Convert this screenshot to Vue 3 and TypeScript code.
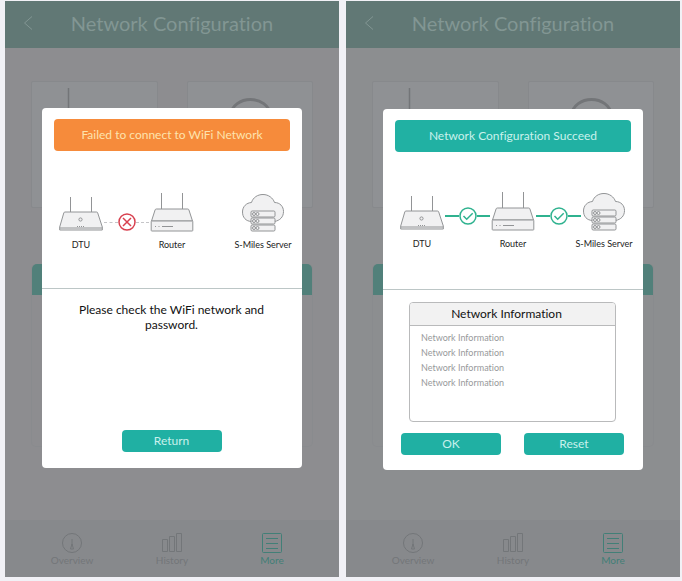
<script setup lang="ts">
type Tone = 'error' | 'success'

interface Screen {
  id: string
  tone: Tone
  status: string
  message?: string
  details?: string[]
  actions: string[]
}

const screens: Screen[] = [
  {
    id: 'failed',
    tone: 'error',
    status: 'Failed to connect to WiFi Network',
    message: 'Please check the WiFi network and password.',
    actions: ['Return'],
  },
  {
    id: 'succeeded',
    tone: 'success',
    status: 'Network Configuration Succeed',
    details: ['Network Information', 'Network Information', 'Network Information', 'Network Information'],
    actions: ['OK', 'Reset'],
  },
]
</script>

<template>
  <main class="page">
    <section v-for="screen in screens" :key="screen.id" class="phone" :class="screen.tone">
      <header class="topbar">
        <button class="back" type="button" aria-label="Back">
          <svg width="10" height="16" viewBox="0 0 10 16"><path d="M9 1.5 1.5 8 9 14.5" /></svg>
        </button>
        <h1>Network Configuration</h1>
      </header>

      <div class="content">
        <div class="cards">
          <div class="card">
            <svg width="124" height="60" viewBox="0 0 124 60"><path d="M36.500 6V50" stroke-width="1.500" /></svg>
          </div>
          <div class="card">
            <svg width="124" height="60" viewBox="0 0 124 60"><path d="M42 34C45 12 80 12 83 34" stroke-width="3" /></svg>
          </div>
        </div>
        <div class="panel"><div class="panel-head"></div></div>
      </div>

      <nav class="tabs">
        <a href="#overview">
          <svg width="22" height="22" viewBox="0 0 22 22">
            <circle cx="11" cy="11" r="9.500" /><path d="M11 7v6M11 12l-1.500 5h3z" />
          </svg>
          <span>Overview</span>
        </a>
        <a href="#history">
          <svg width="22" height="22" viewBox="0 0 22 22">
            <path d="M1.500 7.500h5v12h-5zM8.500 4.500h5v15h-5zM15.500 1.500h5v18h-5z" />
          </svg>
          <span>History</span>
        </a>
        <a href="#more" class="active">
          <svg width="22" height="22" viewBox="0 0 22 22">
            <rect x="1.500" y="1.500" width="19" height="19" rx="1" /><path d="M5 6.500h12M5 11.500h12M5 16.500h12" />
          </svg>
          <span>More</span>
        </a>
      </nav>

      <div class="overlay">
        <div class="dialog" role="dialog" :aria-labelledby="`${screen.id}-status`">
          <div class="summary">
            <h2 :id="`${screen.id}-status`" class="status">{{ screen.status }}</h2>

            <div class="diagram">
              <div class="node">
                <svg class="device" width="44" height="39" viewBox="0 0 44 39">
                  <path d="M11.500 4v15M32.500 4v15" />
                  <path class="fill" d="M6 19h31.500c.6 0 1 .3 1.200.9L43.300 34v3H.7v-3L4.800 19.900c.2-.6.600-.9 1.200-.9z" />
                  <path d="M.7 35h42.600" />
                  <circle cx="21.500" cy="26.500" r="1.600" />
                  <path d="M18 33.500h8" stroke-dasharray="1 1" />
                </svg>
                <span>DTU</span>
              </div>

              <div class="link">
                <svg class="mark" width="18" height="18" viewBox="0 0 18 18">
                  <circle cx="9" cy="9" r="8" />
                  <path v-if="screen.tone === 'error'" d="M5 5l8 8M13 5l-8 8" />
                  <path v-else d="M4.500 9l3.200 3.200 6-6" />
                </svg>
              </div>

              <div class="node">
                <svg class="device" width="44" height="39" viewBox="0 0 44 39">
                  <path d="M11.500 0v16M32.500 0v16" />
                  <path class="fill" d="M6.300 16h31.400c.6 0 1 .3 1.200.9L42.500 28h-41L5.100 16.900c.2-.6.600-.9 1.200-.9z" />
                  <rect class="fill" x="1.200" y="28" width="41.600" height="10" rx=".6" />
                  <path d="M5 33.500h1M8.500 33.500h1M12 33.500h11" />
                </svg>
                <span>Router</span>
              </div>

              <div class="link" :class="{ idle: screen.tone === 'error' }">
                <svg v-if="screen.tone === 'success'" class="mark" width="18" height="18" viewBox="0 0 18 18">
                  <circle cx="9" cy="9" r="8" /><path d="M4.500 9l3.200 3.200 6-6" />
                </svg>
              </div>

              <div class="node">
                <svg class="device" width="44" height="39" viewBox="0 0 44 39">
                  <path
                    class="fill"
                    d="M11 28.500C4.500 28.500 1.500 24 1.500 19 1.500 13.500 5.500 9.800 10.500 9.500 12 4.500 16.500 1.500 22 1.500c5.500 0 10 3.500 11.500 8 5.500 0 9 4 9 9 0 5.500-3.500 9-9 10z"
                  />
                  <g v-for="y in [18, 25, 32]" :key="y">
                    <rect class="fill" x="10" :y="y" width="24" height="6" rx="1.200" />
                    <circle cx="13" :cy="y + 3" r="1.500" /><circle cx="16.500" :cy="y + 3" r="1.500" />
                  </g>
                </svg>
                <span>S-Miles Server</span>
              </div>
            </div>
          </div>

          <div class="body">
            <p v-if="screen.message" class="message">{{ screen.message }}</p>
            <section v-if="screen.details" class="info">
              <h3>Network Information</h3>
              <ul>
                <li v-for="(line, i) in screen.details" :key="i">{{ line }}</li>
              </ul>
            </section>
            <div class="actions">
              <button v-for="label in screen.actions" :key="label" type="button">{{ label }}</button>
            </div>
          </div>
        </div>
      </div>
    </section>
  </main>
</template>

<style>
body {
  background: #f1f1f6;
}
</style>

<style scoped>
* {
  box-sizing: border-box;
}
h1,
h2,
h3,
p,
ul {
  margin: 0;
  padding: 0;
  font-weight: 400;
}
button {
  border: 0;
  padding: 0;
  font: inherit;
  cursor: pointer;
}
svg {
  display: block;
  flex: none;
  fill: none;
  stroke: currentColor;
}
.page {
  min-height: 100vh;
  display: grid;
  grid-template-columns: 1fr 1fr;
  gap: 7px;
  padding: 1px 2px 4px 5px;
  font-family: Lato, "Liberation Sans", sans-serif;
  font-variant-ligatures: none;
}
.phone {
  position: relative;
  display: flex;
  flex-direction: column;
  background: #8d8d90;
}
.phone.success {
  background: #8c8e90;
}
.topbar {
  display: grid;
  grid-template-columns: 36px 1fr 36px;
  align-items: center;
  height: 47px;
  padding-bottom: 4px;
  background: #617875;
  color: #829693;
}
.back {
  display: flex;
  justify-content: flex-end;
  padding: 0 8px 0 0;
  background: none;
  color: inherit;
}
.topbar h1 {
  font-size: 20px;
  line-height: 24px;
  text-align: center;
  white-space: nowrap;
}
.content {
  flex: 1;
  padding: 33px 26px;
}
.cards {
  display: grid;
  grid-template-columns: 1fr 1fr;
  gap: 29px;
}
.card {
  height: 127px;
  border: 1px solid #87898c;
  border-radius: 2px;
  background: #8f9194;
  color: #737578;
}
.panel {
  height: 183px;
  margin-top: 56px;
  border: 1px solid #898b8e;
  border-top: 0;
  border-radius: 5px;
}
.panel-head {
  height: 31px;
  border-radius: 5px 5px 0 0;
  background: #51807a;
}
.tabs {
  display: flex;
  justify-content: space-around;
  height: 57px;
  padding: 12px 17px 0;
  background: #87898c;
}
.tabs a {
  display: flex;
  flex-direction: column;
  align-items: center;
  width: 60px;
  color: #737679;
  font-size: 10px;
  line-height: 12px;
  text-decoration: none;
}
.tabs .active {
  color: #427f77;
}
.overlay {
  position: absolute;
  inset: 0;
  display: flex;
  padding: 107px 37px 109px;
}
.success .overlay {
  padding-top: 108px;
  padding-bottom: 107px;
}
.dialog {
  flex: 1;
  display: flex;
  flex-direction: column;
  border-radius: 4px;
  background: #fff;
}
.summary {
  height: 181px;
  padding: 11px 12px 0;
  border-bottom: 1px solid #bcc6c6;
}
.status {
  border-radius: 4px;
  background: #f68b3b;
  color: #fde3ae;
  font-size: 12px;
  line-height: 32px;
  text-align: center;
}
.success .status {
  background: #21b1a3;
  color: #c9f1ec;
}
.diagram {
  display: flex;
  padding: 42px 5px 0;
}
.success .diagram {
  padding-top: 40px;
}
.node {
  display: flex;
  flex-direction: column;
  align-items: center;
  gap: 7px;
  width: 44px;
  color: #222;
  font-size: 9px;
  line-height: 12px;
  white-space: nowrap;
}
.device {
  color: #929496;
}
.fill {
  fill: #f1f1f2;
}
.link {
  flex: 1;
  display: flex;
  align-items: center;
  height: 18px;
  margin: 20px 1px 0;
  color: #2fb28f;
}
.link::before,
.link::after {
  content: '';
  flex: 1;
  border-top: 2px solid currentColor;
}
.error .link::before,
.error .link::after {
  border-top: 1px dashed #c5c5c8;
}
.error .idle {
  visibility: hidden;
}
.success .link {
  margin-top: 15px;
}
.mark {
  stroke-width: 1.5;
}
.error .mark {
  color: #d8404f;
}
.body {
  flex: 1;
  display: flex;
  flex-direction: column;
  padding: 13px 19px 16px 18px;
}
.success .body {
  padding-top: 12px;
  padding-bottom: 15px;
}
.message {
  padding: 0 8px;
  color: #111;
  font-size: 12px;
  line-height: 15px;
  text-align: center;
}
.info {
  height: 120px;
  margin: 0 8px;
  border: 1px solid #b9babb;
  border-radius: 4px;
  overflow: hidden;
}
.info h3 {
  padding-right: 12px;
  border-bottom: 1px solid #b9babb;
  background: #f2f2f2;
  color: #111;
  font-size: 12px;
  line-height: 22px;
  text-align: center;
}
.info ul {
  padding: 4px 11px;
  color: #97999b;
  font-size: 9px;
  line-height: 15px;
  list-style: none;
}
.actions {
  display: flex;
  justify-content: space-between;
  margin-top: auto;
}
.error .actions {
  justify-content: center;
}
.actions button {
  width: 100px;
  border-radius: 4px;
  background: #20b0a3;
  color: #c9f1ec;
  font-size: 12px;
  line-height: 22px;
}
</style>
